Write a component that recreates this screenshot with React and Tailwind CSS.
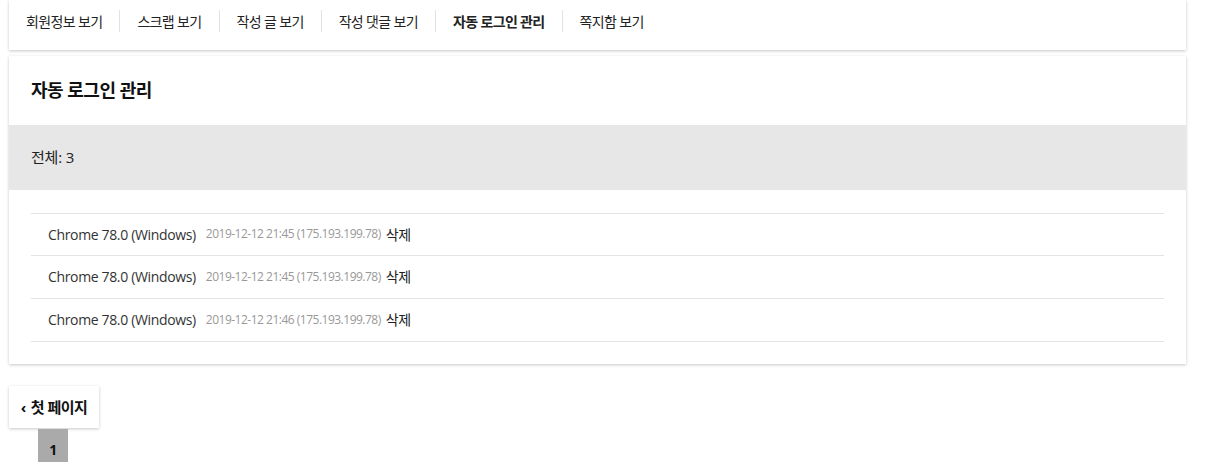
import React from 'react';

const tabs = ['회원정보 보기', '스크랩 보기', '작성 글 보기', '작성 댓글 보기', '자동 로그인 관리', '쪽지함 보기'];

const logins = [
  { agent: 'Chrome 78.0 (Windows)', date: '2019-12-12 21:45', ip: '175.193.199.78' },
  { agent: 'Chrome 78.0 (Windows)', date: '2019-12-12 21:45', ip: '175.193.199.78' },
  { agent: 'Chrome 78.0 (Windows)', date: '2019-12-12 21:46', ip: '175.193.199.78' },
];

export default function App() {
  return (
    <div className="min-h-[462px] bg-white text-[#222] font-['Open_Sans','Noto_Sans_CJK_KR',sans-serif] tracking-[-0.5px]">
      <div className="w-[1177px] ml-[9px] bg-white shadow-[0_1px_3px_rgba(0,0,0,0.22)] h-[50px] flex items-start pt-[10px]">
        {tabs.map((t, i) => (
          <div
            key={t}
            className={`h-[22px] flex items-center px-[17px] text-[14px] tracking-[-0.65px] ${i > 0 ? 'border-l border-[#e2e2e2]' : ''} ${i === 4 ? 'font-bold' : ''}`}
          >
            {t}
          </div>
        ))}
      </div>

      <div className="w-[1177px] ml-[9px] mt-[6px] bg-white shadow-[0_1px_3px_rgba(0,0,0,0.22)]">
        <div className="h-[69px] flex items-center pl-[22px]">
          <h2 className="text-[18px] font-bold text-[#111]">자동 로그인 관리</h2>
        </div>
        <div className="h-[65px] bg-[#e7e7e7] flex items-center pl-[22px] text-[15px] tracking-[-0.2px]">전체: 3</div>
        <div className="px-[22px] pt-[23px] pb-[22px]">
          <ul className="border-t border-[#e3e3e3]">
            {logins.map((l, i) => (
              <li
                key={i}
                className={`${i === 0 ? 'h-[42px]' : 'h-[43px]'} border-b border-[#e3e3e3] flex items-center pl-[17px] pb-px`}
              >
                <span className="text-[14px] text-[#333] tracking-[-0.35px]">{l.agent}</span>
                <span className="ml-[10px] text-[12px] text-[#999] tracking-[-0.5px]">
                  {l.date} ({l.ip})
                </span>
                <a className="ml-[5px] text-[14px] text-[#222]">삭제</a>
              </li>
            ))}
          </ul>
        </div>
      </div>

      <div className="ml-[9px] mt-[22px]">
        <button className="h-[42px] w-[90px] bg-white shadow-[0_1px_3px_rgba(0,0,0,0.22)] text-[15px] font-bold text-[#111] flex items-center justify-center gap-[5px]">
          <span>‹</span>
          <span>첫 페이지</span>
        </button>
        <div className="ml-[29px] mt-px w-[30px] h-[40px] bg-[#aaaaaa] flex items-center justify-center text-[14px] font-bold text-[#111]">1</div>
      </div>
    </div>
  );
}
